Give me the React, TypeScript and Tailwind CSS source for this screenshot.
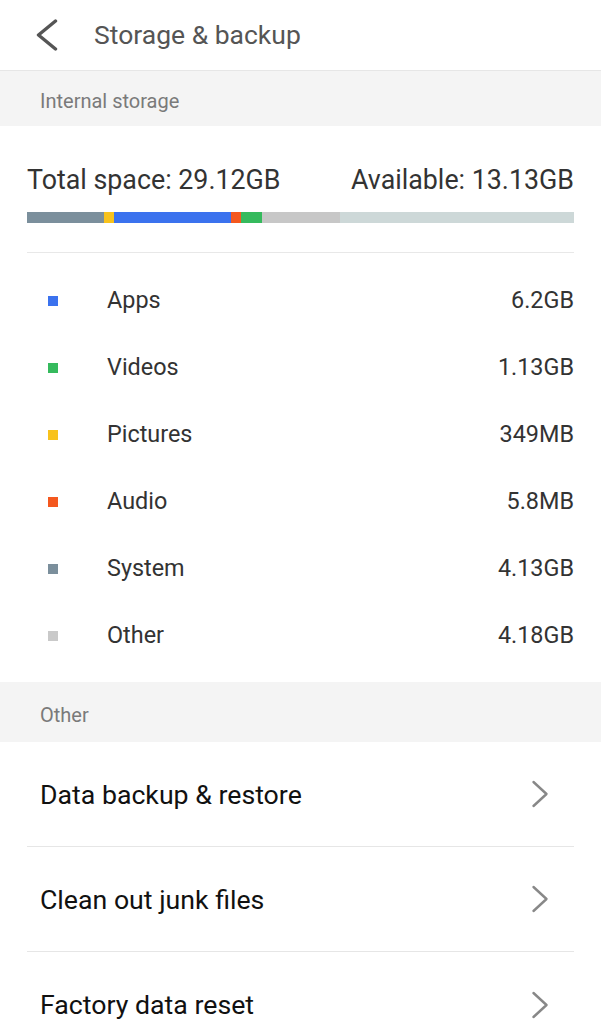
const segments = [
  { color: 'bg-[#7b8f9c]', w: 77 },
  { color: 'bg-[#f8c21c]', w: 10 },
  { color: 'bg-[#3b72ee]', w: 117 },
  { color: 'bg-[#f4581f]', w: 10 },
  { color: 'bg-[#35ba5d]', w: 21 },
  { color: 'bg-[#c7c7c7]', w: 78 },
];

const items = [
  { label: 'Apps', size: '6.2GB', color: 'bg-[#3b72ee]' },
  { label: 'Videos', size: '1.13GB', color: 'bg-[#35ba5d]' },
  { label: 'Pictures', size: '349MB', color: 'bg-[#f8c21c]' },
  { label: 'Audio', size: '5.8MB', color: 'bg-[#f4581f]' },
  { label: 'System', size: '4.13GB', color: 'bg-[#7b8f9c]' },
  { label: 'Other', size: '4.18GB', color: 'bg-[#c9c9c9]' },
];

const actions = ['Data backup & restore', 'Clean out junk files', 'Factory data reset'];

function SectionHeader({ title, h }: { title: string; h: string }) {
  return (
    <div className={`${h} bg-[#f4f4f4] flex items-center pt-[5px] px-[40px] text-[20px] text-[#7a7a7a]`}>
      {title}
    </div>
  );
}

export default function App() {
  return (
    <div className="w-[601px] h-[1024px] overflow-hidden bg-white font-['Roboto',sans-serif]">
      {/* top bar */}
      <div className="h-[71px] flex items-center border-b border-[#e6e6e6]">
        <svg className="ml-[36px] w-[22px] h-[32px]" viewBox="0 0 22 32" fill="none">
          <polyline points="19.5,2 2.5,16 19.5,30" stroke="#555" strokeWidth="3.4" strokeLinecap="round" strokeLinejoin="round" />
        </svg>
        <span className="ml-[36px] text-[26.5px] text-[#555] pb-[1px]">Storage &amp; backup</span>
      </div>

      <SectionHeader title="Internal storage" h="h-[55px]" />

      <div className="px-[27px]">
        <div className="flex justify-between pt-[36px] text-[26.8px] text-[#333] leading-[36px]">
          <span>Total space: 29.12GB</span>
          <span>Available: 13.13GB</span>
        </div>
        <div className="mt-[14px] h-[11px] flex bg-[#cdd8d8]">
          {segments.map((s, i) => (
            <div key={i} className={s.color} style={{ width: s.w }} />
          ))}
        </div>
        <div className="mt-[29px] border-t border-[#e8e8e8]" />
        <div className="pt-[14px] pb-[13px]">
          {items.map((it) => (
            <div key={it.label} className="h-[67px] flex items-center text-[23.4px] text-[#333]">
              <span className={`ml-[21px] w-[10px] h-[10px] ${it.color}`} />
              <span className="ml-[49px] flex-1">{it.label}</span>
              <span>{it.size}</span>
            </div>
          ))}
        </div>
      </div>

      <SectionHeader title="Other" h="h-[60px]" />

      <div className="px-[27px]">
        {actions.map((a, i) => (
          <div
            key={a}
            className={`h-[105px] flex items-center ${i < actions.length - 1 ? 'border-b border-[#e6e6e6]' : ''}`}
          >
            <span className="ml-[13px] flex-1 text-[26.7px] text-[#111] pt-[2px]">{a}</span>
            <svg className="mr-[25px] w-[18px] h-[28px]" viewBox="0 0 18 28" fill="none">
              <polyline points="2.5,2 15.5,14 2.5,26" stroke="#888" strokeWidth="2.4" strokeLinecap="round" strokeLinejoin="round" />
            </svg>
          </div>
        ))}
      </div>
    </div>
  );
}
